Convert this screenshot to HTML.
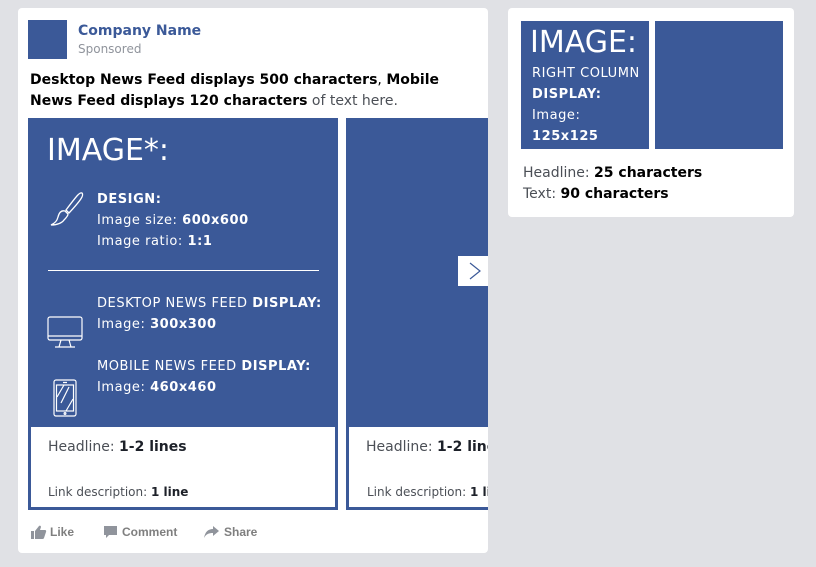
<!DOCTYPE html>
<html><head><meta charset="utf-8"><style>
*{margin:0;padding:0;box-sizing:border-box}
body{width:816px;height:567px;background:#e0e1e5;font-family:"DejaVu Sans","Liberation Sans",sans-serif;position:relative;overflow:hidden;color:#1d2129}
.a{position:absolute;white-space:nowrap}
.card{position:absolute;background:#fff;border-radius:4px}
.blue{position:absolute;background:#3b5998}
.w{color:#fff}
.ls{letter-spacing:0.55px}
b{font-weight:bold}
.g{color:#4b4f56}
</style></head><body>
<div class="card" style="left:18px;top:8px;width:470px;height:545px;overflow:hidden">
  <div class="blue" style="left:10px;top:12px;width:39px;height:39px"></div>
  <div class="a" style="left:60px;top:15px;font-size:14px;color:#3b5998;font-weight:600">Company Name</div>
  <div class="a" style="left:60px;top:34px;font-size:12px;color:#90949c">Sponsored</div>
  <div class="a" style="left:12px;top:62px;font-size:14px;line-height:21px;color:#000"><b style="font-weight:600">Desktop News Feed displays 500 characters</b>, <b style="font-weight:600">Mobile</b><br><b style="font-weight:600">News Feed displays 120 characters</b> <span class="g">of text here.</span></div>

  <div class="blue" style="left:10px;top:110px;width:310px;height:392px"></div>
  <div style="position:absolute;left:13px;top:419px;width:304px;height:80px;background:#fff"></div>
  <div class="a w" style="left:29px;top:125px;font-size:30px">IMAGE*:</div>
  <svg class="a" style="left:31px;top:183px" width="36" height="36" viewBox="0 0 36 36" fill="none" stroke="#fff" stroke-width="1.3"><path d="M33 2 C31 1 29 3 17 19 L20 22 C33 8 35 4 33 2Z"/><path d="M16 20 C12 19 10 22 9 26 C8 30 6 32 2 34 C8 34 13 32 15 29 C17 27 19 25 19 23Z"/></svg>
  <div class="a w ls" style="left:79px;top:181px;font-size:13px;line-height:21px"><b>DESIGN:</b><br>Image size: <b>600x600</b><br>Image ratio: <b>1:1</b></div>
  <div style="position:absolute;left:30px;top:262px;width:271px;height:1px;background:#fff"></div>
  <div class="a w ls" style="left:79px;top:285px;font-size:13px;line-height:21px">DESKTOP NEWS FEED <b>DISPLAY:</b><br>Image: <b>300x300</b></div>
  <svg class="a" style="left:29px;top:308px" width="37" height="33" viewBox="0 0 37 33" fill="none" stroke="#fff" stroke-width="1.2"><rect x="1" y="1" width="34" height="23" rx="2"/><path d="M1 20 H35 M14 24 L12 31 M22 24 L24 31 M8 31 H28"/></svg>
  <div class="a w ls" style="left:79px;top:348px;font-size:13px;line-height:21px">MOBILE NEWS FEED <b>DISPLAY:</b><br>Image: <b>460x460</b></div>
  <svg class="a" style="left:35px;top:371px" width="25" height="39" viewBox="0 0 25 39" fill="none" stroke="#fff" stroke-width="1.2"><rect x="1" y="1" width="22" height="36" rx="2"/><rect x="3.5" y="6" width="17" height="26"/><path d="M10 3.5 H14 M4 18 L11 6 M8 24 L16 8 M13 32 L20 20"/><circle cx="12" cy="34.5" r="0.9"/></svg>
  <div class="a" style="left:30px;top:431px;font-size:14px;color:#4b4f56">Headline: <b style="color:#1d2129">1-2 lines</b></div>
  <div class="a" style="left:30px;top:477px;font-size:12px;color:#4b4f56">Link description: <b style="color:#1d2129">1 line</b></div>

  <div class="blue" style="left:328px;top:110px;width:160px;height:392px"></div>
  <div style="position:absolute;left:331px;top:419px;width:160px;height:80px;background:#fff"></div>
  <div class="a" style="left:348px;top:431px;font-size:14px;color:#4b4f56">Headline: <b style="color:#1d2129">1-2 lines</b></div>
  <div class="a" style="left:349px;top:477px;font-size:12px;color:#4b4f56">Link description: <b style="color:#1d2129">1 line</b></div>
  <div style="position:absolute;left:440px;top:248px;width:32px;height:30px;background:#fff"></div>
  <svg class="a" style="left:450px;top:254px" width="14" height="18" viewBox="0 0 14 18" fill="none" stroke="#3b5998" stroke-width="1.2"><path d="M2 1 L12 9 L2 17"/></svg>

  <svg class="a" style="left:13px;top:517px" width="16" height="14" viewBox="0 0 16 14" fill="#90949c"><rect x="0" y="6" width="3" height="8"/><path d="M4 6 L8 1 C9 0 10 1 10 2 L9 5 H14 C15 5 15.5 6 15 7 L13 13 C12.8 13.6 12.3 14 11.5 14 H4Z"/></svg>
  <div class="a" style="left:32px;top:517px;font-size:12px;font-family:'Liberation Sans',sans-serif;font-weight:bold;color:#7f7f7f">Like</div>
  <svg class="a" style="left:86px;top:518px" width="13" height="13" viewBox="0 0 13 13" fill="#90949c"><path d="M0 0 H13 V9 H5 L2 12 V9 H0Z"/></svg>
  <div class="a" style="left:104px;top:517px;font-size:12px;font-family:'Liberation Sans',sans-serif;font-weight:bold;color:#7f7f7f">Comment</div>
  <svg class="a" style="left:186px;top:518px" width="15" height="13" viewBox="0 0 15 13" fill="#90949c"><path d="M9 0 L15 5 L9 10 V7 C5 7 2 8 0 12 C1 6 4 3 9 3Z"/></svg>
  <div class="a" style="left:206px;top:517px;font-size:12px;font-family:'Liberation Sans',sans-serif;font-weight:bold;color:#7f7f7f">Share</div>
</div>

<div class="card" style="left:508px;top:8px;width:286px;height:209px">
  <div class="blue" style="left:13px;top:13px;width:128px;height:128px"></div>
  <div class="blue" style="left:147px;top:13px;width:128px;height:128px"></div>
  <div class="a w" style="left:22px;top:17px;font-size:30px">IMAGE:</div>
  <div class="a w ls" style="left:24px;top:55px;font-size:13px;line-height:21px">RIGHT COLUMN<br><b>DISPLAY:</b><br>Image:<br><b>125x125</b></div>
  <div class="a" style="left:15px;top:155px;font-size:14px;line-height:21px;color:#4b4f56">Headline: <b style="color:#000">25 characters</b><br>Text: <b style="color:#000">90 characters</b></div>
</div>
</body></html>
